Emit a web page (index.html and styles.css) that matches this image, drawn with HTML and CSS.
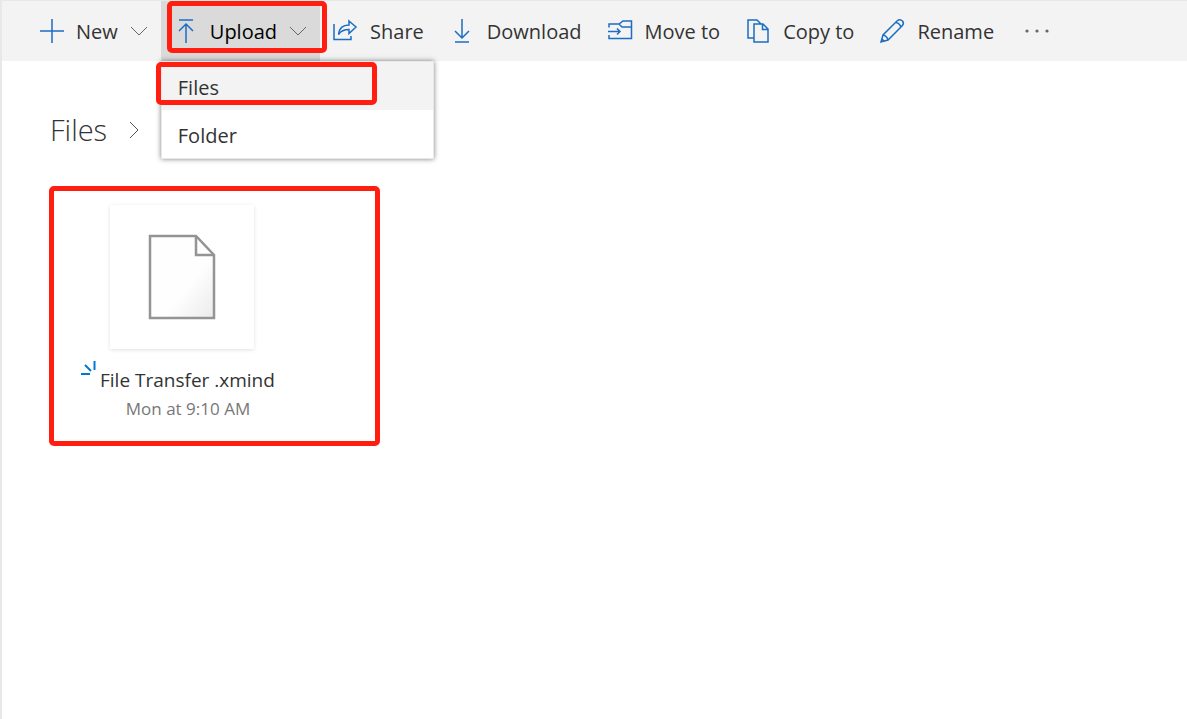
FILE: index.html
```
<!DOCTYPE html>
<html lang="en">
<head>
    <meta charset="UTF-8">
    <meta name="viewport" content="width=device-width, initial-scale=1.0">
    <title>Files</title>
    <link rel="stylesheet" href="styles.css">
</head>
<body>
    <div class="page">
        <!-- Command bar -->
        <div class="toolbar">
            <button class="command has-menu" type="button">
                <svg class="icon" viewBox="0 0 24 24"><path d="M12 0v24M0 12h24"/></svg>
                <span>New</span>
                <svg class="chevron" viewBox="0 0 18 10"><path d="M1 1l8 8 8-8"/></svg>
            </button>
            <div class="dropdown">
                <button class="command has-menu open" type="button" aria-expanded="true">
                    <svg class="icon" viewBox="0 0 24 24"><path d="M5 1h14M12 24V5M5 12l7-7 7 7"/></svg>
                    <span>Upload</span>
                    <svg class="chevron" viewBox="0 0 18 10"><path d="M1 1l8 8 8-8"/></svg>
                </button>
                <div class="menu">
                    <button class="menu-item active" type="button">Files</button>
                    <button class="menu-item" type="button">Folder</button>
                    <div class="mark mark-files"></div>
                </div>
                <div class="mark mark-upload"></div>
            </div>
            <button class="command" type="button">
                <svg class="icon" viewBox="0 0 24 24"><path d="M1 5v15.500h17V17M16 2l7 6-7 6.500v-4c-5 0-8 1-10.500 5C6 10 9 6 16 6z"/></svg>
                <span>Share</span>
            </button>
            <button class="command" type="button">
                <svg class="icon" viewBox="0 0 24 24"><path d="M5 23h14M12 0v19M5 12l7 7 7-7"/></svg>
                <span>Download</span>
            </button>
            <button class="command" type="button">
                <svg class="icon" viewBox="0 0 24 24"><path d="M1 8.500V5h10l4-3h8.500v17.500H1V16M11 5l3 3h9.500M0 12.500h12M9 9.500l3 3-3 3"/></svg>
                <span>Move to</span>
            </button>
            <button class="command" type="button">
                <svg class="icon" viewBox="0 0 24 24"><path d="M8 19H2V1h9l4 4M8 5h9l5 5v13H8zM16.500 5v5.500H22"/></svg>
                <span>Copy to</span>
            </button>
            <button class="command" type="button">
                <svg class="icon" viewBox="0 0 24 24"><path d="M1 23l2-7L17 2q3-2.500 5.500 0 2 2.500-.5 5L8 21zM3 16q4 1 5 5M16 3.500q4 1 5 5M2 20l2 2"/></svg>
                <span>Rename</span>
            </button>
            <button class="command more" type="button" aria-label="More">
                <svg class="icon dots" viewBox="0 0 24 24"><circle cx="2" cy="12" r="1.600"/><circle cx="12" cy="12" r="1.600"/><circle cx="22" cy="12" r="1.600"/></svg>
            </button>
        </div>

        <!-- Breadcrumb -->
        <nav class="breadcrumb">
            <a href="#">Files</a>
            <svg class="crumb-arrow" viewBox="0 0 10 18"><path d="M1 1l8 8-8 8"/></svg>
        </nav>

        <!-- File tiles -->
        <main class="files">
            <div class="file">
                <div class="thumb">
                    <svg class="doc" viewBox="0 0 68 86">
                        <defs>
                            <linearGradient id="paper" x1="0" y1="0" x2="1" y2="1">
                                <stop offset="0.600" stop-color="#fefefe"/>
                                <stop offset="1" stop-color="#ebebeb"/>
                            </linearGradient>
                        </defs>
                        <path d="M2 2h46l18 19v63H2z" fill="url(#paper)"/>
                        <path d="M48 2v19h18"/>
                    </svg>
                </div>
                <div class="file-name">
                    <svg class="new-mark" viewBox="0 0 16 16"><path d="M13.500 0v9M4 4l6 6M0 13h9"/></svg>
                    <span>File Transfer .xmind</span>
                </div>
                <div class="file-date">Mon at 9:10 AM</div>
            </div>
        </main>
    </div>
</body>
</html>
```
FILE: styles.css
```
:root {
    --bar-color: #f3f3f3;
    --border-color: #e8e8e8;
    --text-color: #333333;
    --icon-color: #1b6ec2;
    --mark-color: #ff1e10;
}

* {
    box-sizing: border-box;
}

body {
    margin: 0;
    font-family: "Open Sans", "Noto Sans", sans-serif;
    font-size: 20px;
    line-height: 28px;
    color: var(--text-color);
    background-color: #ffffff;
}

.page {
    min-height: 100vh;
    border-top: 1px solid var(--border-color);
    border-left: 2px solid var(--border-color);
}

button {
    border: none;
    background: none;
    font: inherit;
    color: inherit;
    cursor: pointer;
}

svg {
    display: block;
    flex: none;
    fill: none;
    stroke: var(--icon-color);
    stroke-width: 1.5;
}

.toolbar {
    display: flex;
    height: 60px;
    padding-left: 25px;
    background-color: var(--bar-color);
}

.command {
    display: flex;
    align-items: center;
    gap: 13px;
    height: 60px;
    padding: 0 13px;
    white-space: nowrap;
}

.command span {
    padding-top: 2px;
}

.command.has-menu {
    gap: 12px;
}

.command.open {
    background-color: #dadada;
    color: #000000;
}

.command.more {
    padding-left: 18px;
}

.icon {
    width: 24px;
    height: 24px;
    overflow: visible;
}

.dots {
    fill: #666666;
    stroke: none;
}

.chevron {
    width: 18px;
    height: 10px;
    stroke: #666666;
    stroke-width: 1;
}

.dropdown {
    position: relative;
}

.menu {
    position: absolute;
    top: 60px;
    left: 0;
    z-index: 1;
    width: 273px;
    border: 1px solid #e8e8e8;
    background-color: #ffffff;
    box-shadow: 0 0 5px rgba(0, 0, 0, 0.5);
}

.menu-item {
    display: block;
    width: 100%;
    height: 48px;
    padding: 4px 16px 0;
    text-align: left;
}

.menu-item.active {
    background-color: var(--bar-color);
}

/* Red highlight frames */
.mark {
    position: absolute;
    border: 5px solid var(--mark-color);
    border-radius: 5px;
    pointer-events: none;
}

.mark-upload {
    top: 0;
    left: 6px;
    z-index: 2;
    width: 160px;
    height: 52px;
}

.mark-files {
    top: 0;
    left: -6px;
    width: 221px;
    height: 43px;
}

.breadcrumb {
    display: flex;
    align-items: center;
    gap: 22px;
    padding: 49px 48px 0;
    font-size: 29px;
    line-height: 40px;
}

.breadcrumb a {
    color: inherit;
    font-weight: 300;
    text-decoration: none;
}

.crumb-arrow {
    width: 10px;
    height: 18px;
    stroke: #555555;
    stroke-width: 1;
}

.files {
    display: flex;
    padding: 36px 47px;
}

.file {
    width: 331px;
    height: 260px;
    padding: 14px 27px;
    border: 5px solid var(--mark-color);
    border-radius: 5px;
}

.thumb {
    display: flex;
    align-items: center;
    justify-content: center;
    width: 144px;
    height: 144px;
    margin-left: 29px;
    box-shadow: 0 1px 4px rgba(0, 0, 0, 0.12);
}

.doc {
    width: 68px;
    height: 86px;
    stroke: #949494;
    stroke-width: 2.5;
}

.file-name {
    display: flex;
    gap: 3px;
    margin-top: 12px;
    font-size: 19px;
    line-height: 38px;
}

.new-mark {
    width: 16px;
    height: 16px;
    stroke: #0078d4;
    stroke-width: 2;
}

.file-date {
    width: 214px;
    font-size: 17px;
    line-height: 20px;
    text-align: center;
    color: #777777;
}
```
